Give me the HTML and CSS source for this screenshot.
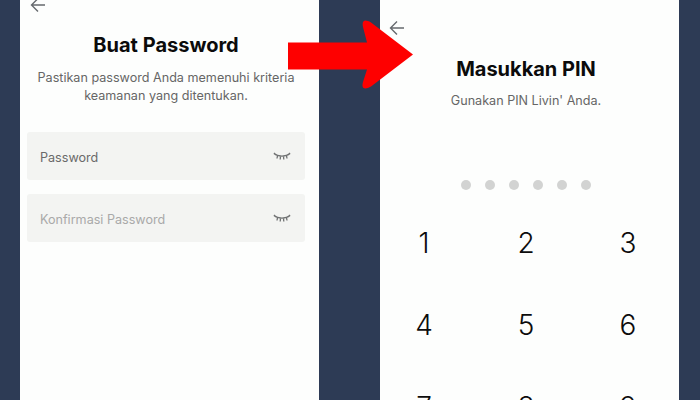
FILE: index.html
```html
<!DOCTYPE html>
<html lang="id">
<head>
<meta charset="utf-8">
<title>Buat Password dan Masukkan PIN</title>
<link rel="stylesheet" href="styles.css">
</head>
<body>
<div class="stage">
  <section class="phone phone-left">
    <svg class="back back-left" viewBox="0 0 16 16" width="16" height="16" aria-hidden="true"><path d="M15 8H1.5M8 1.5 1.5 8 8 14.5"/></svg>
    <h1 class="title title-left">Buat Password</h1>
    <p class="sub sub-left">Pastikan password Anda memenuhi kriteria<br>keamanan yang ditentukan.</p>
    <div class="fields">
      <div class="field"><span class="label">Password</span>
        <svg class="eye" viewBox="0 0 18 9" width="18" height="9" aria-hidden="true"><path d="M1 1.500C5 5 13 5 17 1.500M1 1 2.800 2.800M4.500 3.600 4 6.500M7.500 4.300 7.200 7.500M10.500 4.300 10.800 7.500M13.500 3.600 14 6.500M17 1 15.200 2.800"/></svg>
      </div>
      <div class="field"><span class="label label-muted">Konfirmasi Password</span>
        <svg class="eye" viewBox="0 0 18 9" width="18" height="9" aria-hidden="true"><path d="M1 1.500C5 5 13 5 17 1.500M1 1 2.800 2.800M4.500 3.600 4 6.500M7.500 4.300 7.200 7.500M10.500 4.300 10.800 7.500M13.500 3.600 14 6.500M17 1 15.200 2.800"/></svg>
      </div>
    </div>
  </section>
  <section class="phone phone-right">
    <svg class="back back-right" viewBox="0 0 16 16" width="16" height="16" aria-hidden="true"><path d="M15 8H1.5M8 1.5 1.5 8 8 14.5"/></svg>
    <h1 class="title title-right">Masukkan PIN</h1>
    <p class="sub">Gunakan PIN Livin' Anda.</p>
    <div class="dots"><i></i><i></i><i></i><i></i><i></i><i></i></div>
    <div class="keys">
      <span>1</span><span>2</span><span>3</span>
      <span>4</span><span>5</span><span>6</span>
      <span>7</span><span>8</span><span>9</span>
    </div>
  </section>
  <svg class="arrow" viewBox="0 0 126 70" width="126" height="70" aria-hidden="true"><path d="M0 22.500H79L75 7C73.500 0 77 -1 83 2.500L125 34.500 83 66.500C77 70 73 69 75 62L79 49.500H0Z"/></svg>
</div>
</body>
</html>
```

FILE: styles.css
```css
* { box-sizing: border-box; }
html, body { margin: 0; height: 400px; overflow: hidden; }
body { background: #2d3b55; font-family: Inter, "Liberation Sans", sans-serif; }
.stage { position: relative; display: flex; gap: 61px; padding-left: 20px; height: 400px; overflow: hidden; }
.phone { width: 299px; height: 400px; padding-right: 7px; background: #fdfefd; display: flex; flex-direction: column; align-items: center; overflow: hidden; flex: none; }
.back { fill: none; stroke: #666a6e; stroke-width: 1.4; align-self: flex-start; flex: none; }
.back-left { margin: -3px 0 0 10px; }
.back-right { margin: 20px 0 0 9px; }
.title { margin: 0; font-size: 20px; line-height: 24px; font-weight: 700; color: #0b0b0b; text-align: center; }
.title-left { margin-top: 20px; }
.title-right { margin-top: 21px; }
.sub { margin: 11px 0 0; font-size: 12.6px; line-height: 18px; color: #666666; text-align: center; }
.sub-left { margin-top: 12px; }
.fields { width: 278px; margin-top: 27px; display: flex; flex-direction: column; gap: 14px; flex: none; }
.field { height: 48px; background: #f3f4f2; border-radius: 3px; display: flex; align-items: center; justify-content: space-between; padding: 0 14px 0 13px; }
.label { font-size: 12.6px; color: #6a6a6a; margin-top: 2px; }
.label-muted { color: #a9a9a9; }
.eye { fill: none; stroke: #6f7172; stroke-width: 1.3; flex: none; }
.dots { display: flex; gap: 14px; margin-top: 70px; flex: none; }
.dots i { width: 10px; height: 10px; border-radius: 50%; background: #d2d3d2; }
.keys { width: 306px; margin-top: 37px; display: grid; grid-template-columns: repeat(3, 102px); grid-auto-rows: 82px; justify-items: center; flex: none; }
.keys span { font-size: 28px; line-height: 32px; color: #0c0c0c; font-weight: 350; }
.arrow { position: absolute; left: 288px; top: 20px; fill: #fe0000; }
```
